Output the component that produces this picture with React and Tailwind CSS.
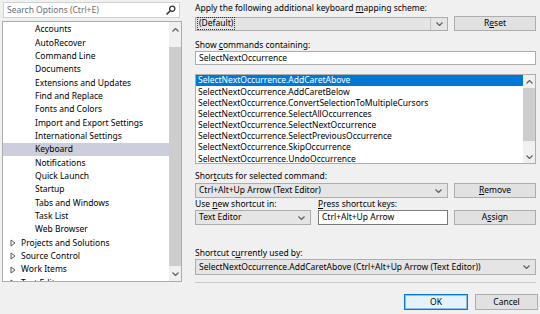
const treeItems = [
  { label: "Accounts" },
  { label: "AutoRecover" },
  { label: "Command Line" },
  { label: "Documents" },
  { label: "Extensions and Updates" },
  { label: "Find and Replace" },
  { label: "Fonts and Colors" },
  { label: "Import and Export Settings" },
  { label: "International Settings" },
  { label: "Keyboard", selected: true },
  { label: "Notifications" },
  { label: "Quick Launch" },
  { label: "Startup" },
  { label: "Tabs and Windows" },
  { label: "Task List" },
  { label: "Web Browser" },
  { label: "Projects and Solutions", parent: true },
  { label: "Source Control", parent: true },
  { label: "Work Items", parent: true },
  { label: "Text Editor", parent: true },
];

const commands = [
  "SelectNextOccurrence.AddCaretAbove",
  "SelectNextOccurrence.AddCaretBelow",
  "SelectNextOccurrence.ConvertSelectionToMultipleCursors",
  "SelectNextOccurrence.SelectAllOccurrences",
  "SelectNextOccurrence.SelectNextOccurrence",
  "SelectNextOccurrence.SelectPreviousOccurrence",
  "SelectNextOccurrence.SkipOccurrence",
  "SelectNextOccurrence.UndoOccurrence",
];

const Chevron = ({ up = false }) => (
  <svg width="7" height="4" viewBox="0 0 7 4">
    <path
      d={up ? "M0.5 3.5 L3.5 0.5 L6.5 3.5" : "M0.5 0.5 L3.5 3.5 L6.5 0.5"}
      fill="none"
      stroke="#606060"
      strokeWidth="1.2"
    />
  </svg>
);

const Triangle = () => (
  <svg width="6" height="8" viewBox="0 0 6 8">
    <path d="M1 1 L5 4 L1 7 Z" fill="none" stroke="#555" strokeWidth="1" />
  </svg>
);

const Combo = ({ children, className = "" }) => (
  <div className={`flex items-center border border-[#adadad] bg-[#e5e5e5] ${className}`}>
    <div className="flex-1 whitespace-nowrap pl-[3px] leading-none">{children}</div>
    <div className="flex h-full w-[17px] items-center justify-center">
      <Chevron />
    </div>
  </div>
);

const Button = ({ children, className = "", primary = false }) => (
  <button
    type="button"
    className={`flex items-center justify-center border leading-none ${primary ? "border-[#0078d7] bg-[#e5f1fb] ring-1 ring-inset ring-[#0078d7]/40" : "border-[#adadad] bg-[#e1e1e1]"} ${className}`}
  >
    {children}
  </button>
);

const Label = ({ children, className = "" }) => (
  <div className={`flex items-center leading-none text-black ${className}`}>{children}</div>
);

export default function App() {
  return (
    <div className="flex h-[314px] w-[540px] overflow-hidden bg-[#f0f0f0] pl-[2px] font-['Noto_Sans',sans-serif] text-[8.5px] text-black">
      {/* left: search + tree */}
      <div className="flex w-[180px] flex-col">
        <div className="ml-[1px] mt-[2px] flex h-[16px] w-[177px] items-center justify-between border border-[#d0d0d0] bg-white pl-[3px] pr-[3px] leading-none text-[#6d6d6d]">
          <span>Search Options (Ctrl+E)</span>
          <svg width="10" height="10" viewBox="0 0 10 10">
            <circle cx="6.2" cy="3.8" r="2.6" fill="none" stroke="#333" strokeWidth="1.3" />
            <path d="M4.3 5.7 L1 9" stroke="#333" strokeWidth="1.6" strokeLinecap="round" />
          </svg>
        </div>
        <div className="mt-[3px] flex h-[261px] w-[180px] border border-[#acacac] bg-white">
          <div className="flex-1 overflow-hidden pt-[1px]">
            {treeItems.map((item) => (
              <div
                key={item.label}
                className={`flex h-[13.33px] items-center whitespace-nowrap leading-none ${item.selected ? "bg-[#cccedb]" : ""} ${item.parent ? "pl-[7px]" : "pl-[32px]"}`}
              >
                {item.parent && (
                  <span className="mr-[5px] flex w-[6px] items-center">
                    <Triangle />
                  </span>
                )}
                {item.label}
              </div>
            ))}
          </div>
          <div className="flex w-[12px] flex-col bg-[#f0f0f0]">
            <div className="flex h-[16px] items-center justify-center">
              <Chevron up />
            </div>
            <div className="mt-[9px] h-[219px] bg-[#cdcdcd]" />
            <div className="mt-auto flex h-[14px] items-center justify-center">
              <Chevron />
            </div>
          </div>
        </div>
      </div>

      {/* right: keyboard settings */}
      <div className="ml-[13px] flex w-[343px] flex-col pt-[2px]">
        <Label className="h-[13px]">
          <span>
            Apply the following additional keyboard <u>m</u>apping scheme:
          </span>
        </Label>
        <div className="mt-[1px] flex h-[15px] w-[341px] items-center gap-[6px]">
          <div className="flex h-[14px] w-[253px] items-center border border-[#adadad] bg-[#e5e5e5]">
            <div className="flex flex-1 items-center pl-[1px]">
              <span className="border border-dotted border-[#333] px-[1px] py-[1px] leading-none">(Default)</span>
            </div>
            <div className="flex h-full w-[17px] items-center justify-center border-l border-[#c4c4c4]">
              <Chevron />
            </div>
          </div>
          <Button className="h-[15px] w-[82px]">
            R<u>e</u>set
          </Button>
        </div>

        <Label className="mt-[9px] h-[11px]">
          <span>
            Show <u>c</u>ommands containing:
          </span>
        </Label>
        <div className="flex h-[14px] w-[341px] items-center border border-[#adadad] bg-white pl-[3px] leading-none">
          SelectNextOccurrence
        </div>

        <div className="mt-[9px] flex h-[90px] w-[341px] border border-[#adadad] bg-white">
          <div className="flex-1 overflow-hidden">
            {commands.map((c, i) => (
              <div
                key={c}
                className={`flex h-[11.2px] items-center whitespace-nowrap pl-[2px] leading-none ${i === 0 ? "bg-[#0078d7] text-white" : ""}`}
              >
                {c}
              </div>
            ))}
          </div>
          <div className="flex w-[12px] flex-col bg-[#f0f0f0]">
            <div className="flex h-[13px] items-center justify-center">
              <Chevron up />
            </div>
            <div className="h-[53px] bg-[#cdcdcd]" />
            <div className="mt-auto flex h-[13px] items-center justify-center">
              <Chevron />
            </div>
          </div>
        </div>

        <Label className="mt-[6px] h-[12px]">
          <span>
            Shor<u>t</u>cuts for selected command:
          </span>
        </Label>
        <div className="mt-[1px] flex h-[15px] w-[341px] items-center gap-[6px]">
          <Combo className="h-[15px] w-[253px]">Ctrl+Alt+Up Arrow (Text Editor)</Combo>
          <Button className="h-[15px] w-[82px]">
            <u>R</u>emove
          </Button>
        </div>

        <div className="flex h-[12px] w-[341px] items-center">
          <Label className="w-[123px]">
            <span>
              Use <u>n</u>ew shortcut in:
            </span>
          </Label>
          <Label>
            <span>
              <u>P</u>ress shortcut keys:
            </span>
          </Label>
        </div>
        <div className="flex h-[15px] w-[341px] items-center">
          <Combo className="h-[15px] w-[116px]">Text Editor</Combo>
          <div className="ml-[7px] flex h-[15px] w-[130px] items-center border border-[#7a7a7a] bg-white pl-[3px] leading-none">
            Ctrl+Alt+Up Arrow
          </div>
          <Button className="ml-[6px] h-[15px] w-[82px]">
            A<u>s</u>sign
          </Button>
        </div>

        <Label className="mt-[22px] h-[12px]">
          <span>
            Shortcut c<u>u</u>rrently used by:
          </span>
        </Label>
        <Combo className="h-[16px] w-[341px]">SelectNextOccurrence.AddCaretAbove (Ctrl+Alt+Up Arrow (Text Editor))</Combo>

        <div className="mt-[7px] h-px w-[341px] bg-[#c8c8c8]" />

        <div className="mt-[11px] flex w-[343px] justify-end gap-[7px]">
          <Button primary className="h-[16px] w-[64px]">
            OK
          </Button>
          <Button className="h-[16px] w-[63px]">Cancel</Button>
        </div>
      </div>
    </div>
  );
}
